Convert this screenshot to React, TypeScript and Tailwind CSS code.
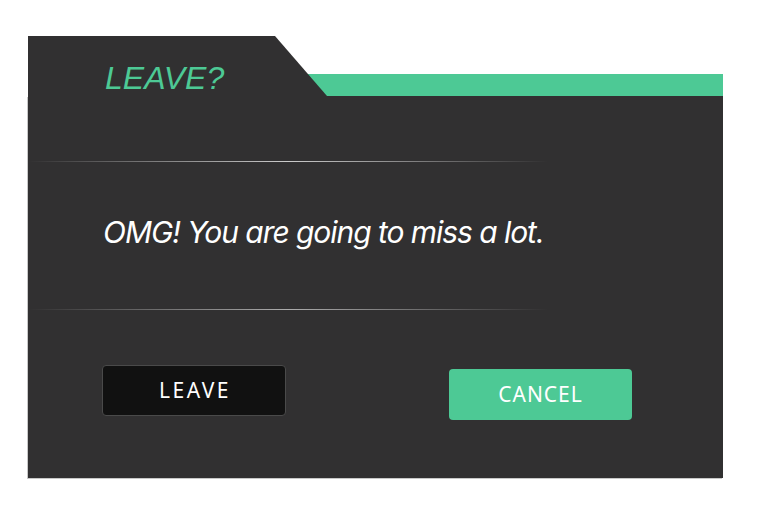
export default function App() {
  return (
    <div className="min-h-screen w-full bg-white pl-[28px] pt-[36px]">
      <div className="w-[695px]">
        {/* Header: tab + green bar */}
        <div className="flex h-[60px] items-end">
          <div className="relative z-10 h-full w-[299px] bg-[#313031] pl-[77px] pt-[26px] [clip-path:polygon(0_0,247px_0,100%_100%,0_100%)]">
            <h1 className="text-[32px] italic leading-none text-[#4dc995] [font-family:'Liberation_Sans',Arial,sans-serif]">
              LEAVE?
            </h1>
          </div>
          <div className="-ml-[20px] h-[22px] flex-1 bg-[#4dc995]" />
        </div>

        {/* Body */}
        <div className="bg-[#313031] pb-[58px] pt-[65px] shadow-[-1px_1px_0_#c8c8c8]">
          <div className="h-px w-[520px] bg-[linear-gradient(90deg,rgba(255,255,255,0)_0%,rgba(255,255,255,0.75)_50%,rgba(255,255,255,0)_100%)]" />

          <p className="mt-[52px] pl-[75px] text-[30px] italic leading-[36px] tracking-[-0.035em] text-white [font-family:Inter,'Noto_Sans',sans-serif]">
            OMG! You are going to miss a lot.
          </p>

          <div className="mt-[59px] h-px w-[520px] bg-[linear-gradient(90deg,rgba(255,255,255,0)_0%,rgba(255,255,255,0.6)_50%,rgba(255,255,255,0)_100%)]" />

          <div className="mt-[55px] flex items-start justify-between pl-[74px] pr-[91px]">
            <button className="flex h-[51px] w-[184px] items-center justify-center rounded-[4px] border border-[#4a4a4a] bg-[#111111] pl-[2px] text-[21px] tracking-[2.5px] text-white [font-family:'Noto_Sans',sans-serif]">
              LEAVE
            </button>
            <button className="mt-[4px] flex h-[51px] w-[183px] items-center justify-center rounded-[4px] bg-[#4dc995] text-[21px] tracking-[1px] text-white [font-family:'Noto_Sans',sans-serif]">
              CANCEL
            </button>
          </div>
        </div>
      </div>
    </div>
  )
}
